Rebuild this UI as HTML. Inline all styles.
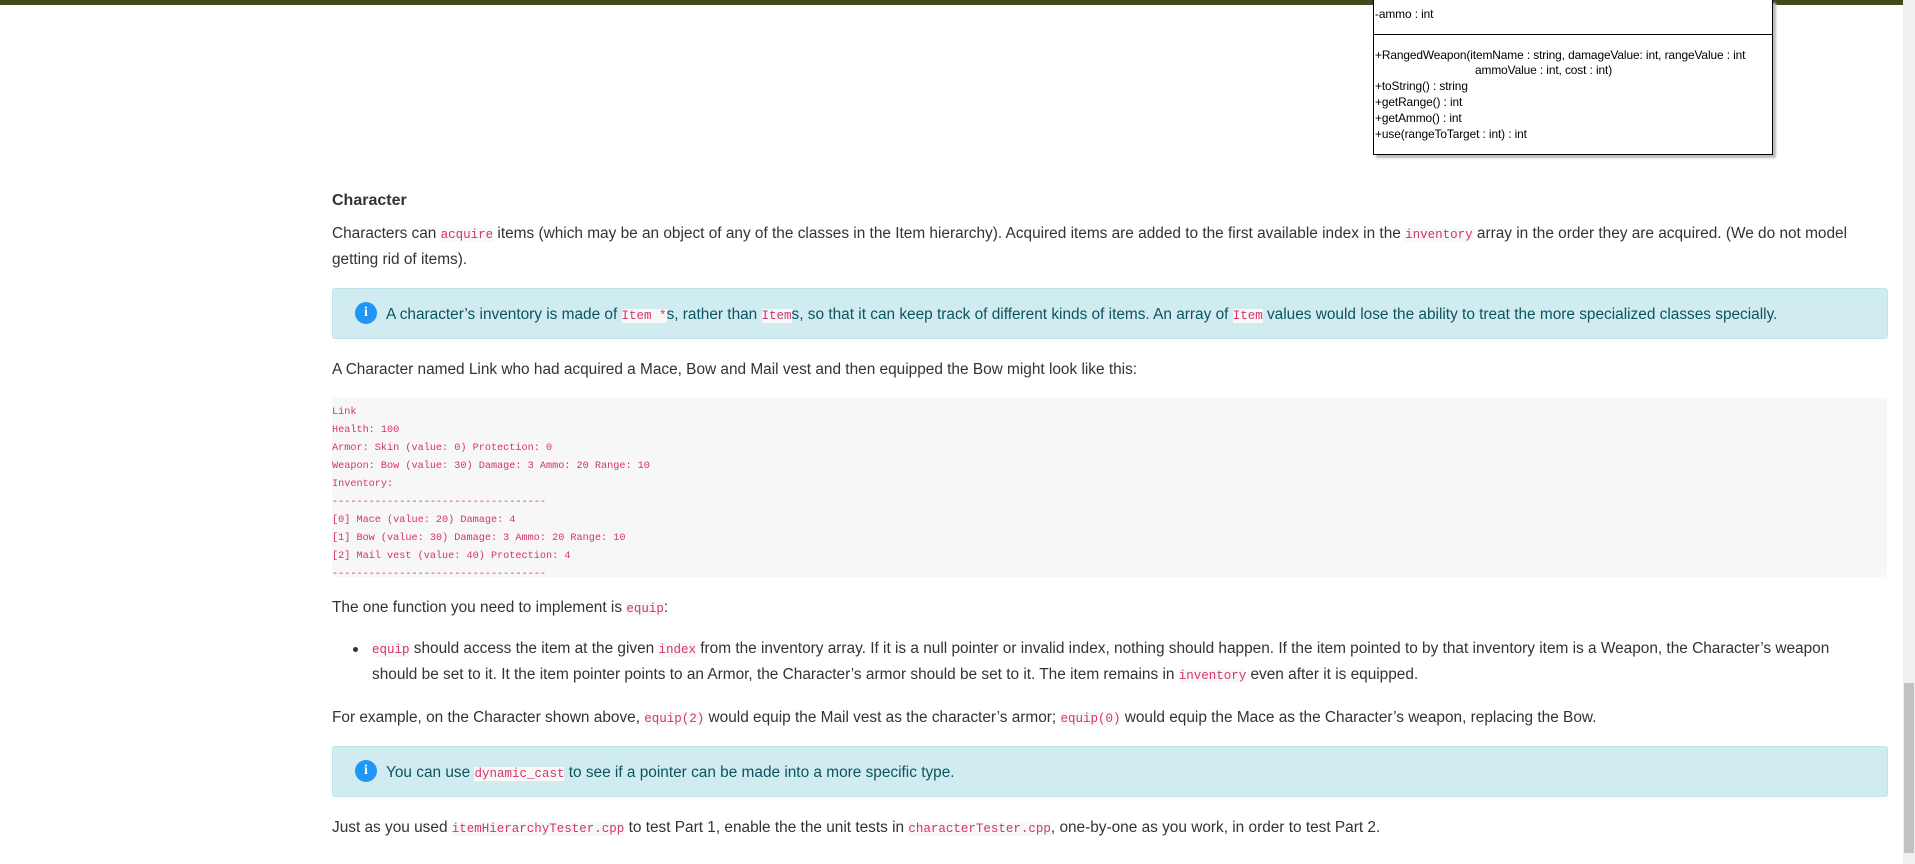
<!DOCTYPE html>
<html><head><meta charset="utf-8"><style>
html,body{margin:0;padding:0;}
body{width:1915px;height:864px;overflow:hidden;background:#fff;position:relative;font-family:"Liberation Sans",sans-serif;color:#333;font-size:15.4px;}
.topbar{position:absolute;left:0;top:0;width:1903px;height:5px;background:#404a1a;}
.sb{position:absolute;right:0;top:0;width:12px;height:864px;background:#f0f0f0;}
.thumb{position:absolute;right:1px;top:683px;width:10px;height:170px;background:#c1c1c1;}
.uml{position:absolute;left:1373px;top:0;width:398px;height:154px;border:1px solid #000;border-top:none;box-shadow:3px 3px 2px #bbb;font-size:11.9px;color:#000;background:#fff;}
.uml .l{position:absolute;left:1px;white-space:nowrap;letter-spacing:-0.1px;}
.uml .sep{position:absolute;left:0;right:0;top:34px;border-top:1px solid #000;}
.t{position:absolute;left:332px;white-space:nowrap;}
code{font-family:"Liberation Mono",monospace;font-size:12.5px;color:#d6336c;background:#f8f8f8;}
h4{position:absolute;left:332px;top:192px;margin:0;font-size:16px;font-weight:bold;color:#333;}
.alert{position:absolute;left:332px;width:1554px;background:#d1ecf1;border:1px solid #bee5eb;border-radius:3px;color:#0c5460;}
.alert .ic{position:absolute;left:22px;width:22px;height:22px;border-radius:50%;background:#2196f3;color:#fff;font-weight:bold;font-size:14px;text-align:center;line-height:22px;font-family:"Liberation Serif",serif;}
.alert .tx{position:absolute;left:53px;white-space:nowrap;}
pre{position:absolute;left:332px;top:398px;width:1555px;height:179px;margin:0;background:#f7f7f7;border-radius:3px;font-family:"Liberation Mono",monospace;font-size:10.2px;line-height:18px;color:#d6336c;padding:0;}
pre div{position:absolute;left:0;white-space:pre;}
.dot{position:absolute;left:353px;width:5px;height:5px;border-radius:50%;background:#333;}
</style></head><body>
<div class="topbar"></div>
<div class="uml">
<div class="l" style="top:7px">-ammo : int</div>
<div class="sep"></div>
<div class="l" style="top:48px">+RangedWeapon(itemName : string, damageValue: int, rangeValue : int</div>
<div class="l" style="top:63px;left:101px">ammoValue : int, cost : int)</div>
<div class="l" style="top:79px">+toString() : string</div>
<div class="l" style="top:95px">+getRange() : int</div>
<div class="l" style="top:111px">+getAmmo() : int</div>
<div class="l" style="top:127px">+use(rangeToTarget : int) : int</div>
</div>

<h4>Character</h4>
<div class="t" style="top:225px">Characters can <code>acquire</code> items (which may be an object of any of the classes in the Item hierarchy). Acquired items are added to the first available index in the <code>inventory</code> array in the order they are acquired. (We do not model</div>
<div class="t" style="top:251px">getting rid of items).</div>

<div class="alert" style="top:288px;height:49px">
<div class="ic" style="top:13px">i</div>
<div class="tx" style="top:17px">A character’s inventory is made of <code>Item *</code>s, rather than <code>Item</code>s, so that it can keep track of different kinds of items. An array of <code>Item</code> values would lose the ability to treat the more specialized classes specially.</div>
</div>

<div class="t" style="top:361px">A Character named Link who had acquired a Mace, Bow and Mail vest and then equipped the Bow might look like this:</div>

<pre><div style="top:6px">Link</div><div style="top:24px">Health: 100</div><div style="top:42px">Armor: Skin (value: 0) Protection: 0</div><div style="top:60px">Weapon: Bow (value: 30) Damage: 3 Ammo: 20 Range: 10</div><div style="top:78px">Inventory:</div><div style="top:96px">-----------------------------------</div><div style="top:114px">[0] Mace (value: 20) Damage: 4</div><div style="top:132px">[1] Bow (value: 30) Damage: 3 Ammo: 20 Range: 10</div><div style="top:150px">[2] Mail vest (value: 40) Protection: 4</div><div style="top:168px">-----------------------------------</div></pre>

<div class="t" style="top:599px">The one function you need to implement is <code>equip</code>:</div>
<div class="dot" style="top:647px"></div>
<div class="t" style="top:640px;left:372px"><code>equip</code> should access the item at the given <code>index</code> from the inventory array. If it is a null pointer or invalid index, nothing should happen. If the item pointed to by that inventory item is a Weapon, the Character’s weapon</div>
<div class="t" style="top:666px;left:372px">should be set to it. It the item pointer points to an Armor, the Character’s armor should be set to it. The item remains in <code>inventory</code> even after it is equipped.</div>
<div class="t" style="top:709px">For example, on the Character shown above, <code>equip(2)</code> would equip the Mail vest as the character’s armor; <code>equip(0)</code> would equip the Mace as the Character’s weapon, replacing the Bow.</div>

<div class="alert" style="top:746px;height:49px">
<div class="ic" style="top:13px">i</div>
<div class="tx" style="top:17px">You can use <code>dynamic_cast</code> to see if a pointer can be made into a more specific type.</div>
</div>

<div class="t" style="top:819px">Just as you used <code>itemHierarchyTester.cpp</code> to test Part 1, enable the the unit tests in <code>characterTester.cpp</code>, one-by-one as you work, in order to test Part 2.</div>

<div class="sb"><div class="thumb"></div></div>
</body></html>
